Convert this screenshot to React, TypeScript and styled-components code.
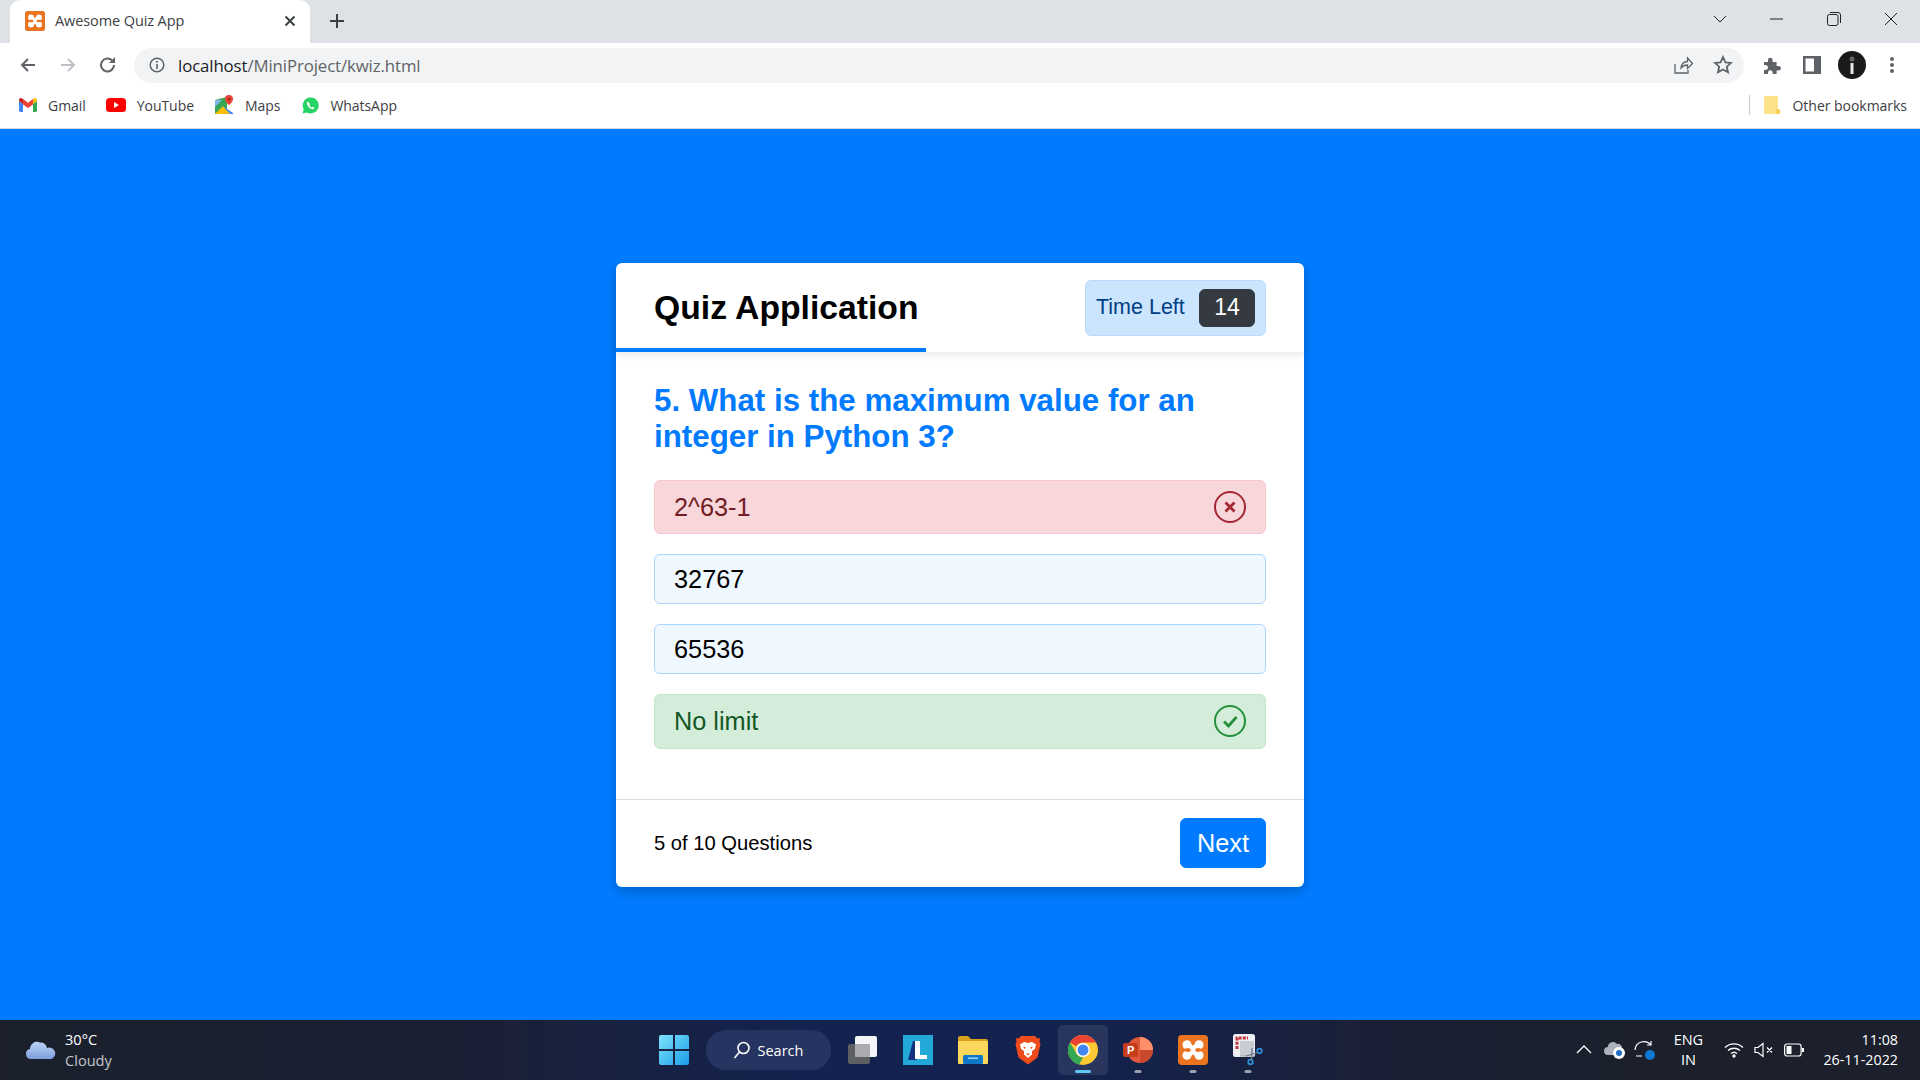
import React from "react";
import styled, { createGlobalStyle } from "styled-components";

const Global = createGlobalStyle`
  html, body { margin: 0; padding: 0; height: 100%; overflow: hidden; }
  body { font-family: "Liberation Sans", Arial, sans-serif; background: #007bff; }
  * { box-sizing: border-box; }
`;
const UI = `"Open Sans", "Noto Sans", sans-serif`;

const Shell = styled.div`display:flex;flex-direction:column;width:1920px;height:1080px;`;

/* ---------- browser chrome ---------- */
const TabStrip = styled.div`height:43px;background:#dee1e6;display:flex;align-items:stretch;padding-left:10px;flex:none;`;
const Tab = styled.div`
  width:300px;background:#fff;border-radius:10px 10px 0 0;display:flex;align-items:center;padding:0 14px 2px 15px;gap:10px;
  font:14.5px ${UI};color:#3c4043;
`;
const TabTitle = styled.span`flex:1;letter-spacing:-.1px;`;
const NewTab = styled.div`width:54px;display:flex;align-items:center;justify-content:center;padding-bottom:2px;`;
const WindowControls = styled.div`margin-left:auto;display:flex;align-items:flex-start;padding-right:1px;`;
const WinBtn = styled.div`width:57px;display:flex;justify-content:center;align-items:center;height:38px;`;
const Toolbar = styled.div`height:41px;background:#fff;display:flex;align-items:center;flex:none;padding:3px 0 0 19px;`;
const NavGroup = styled.div`display:grid;grid-template-columns:40px 40px 35px;flex:none;`;
const NavBtn = styled.div`display:flex;justify-content:flex-start;align-items:center;`;
const UrlBar = styled.div`
  width:1610px;height:35px;border-radius:18px;background:#f1f3f4;display:flex;align-items:center;padding:0 11px 0 15px;
  font:16.8px ${UI};color:#5f6368;flex:none;letter-spacing:-.1px;
`;
const UrlHost = styled.span`color:#202124;margin-left:13px;`;
const UrlPath = styled.span`color:#5f6368;`;
const UrlActions = styled.div`margin-left:auto;display:flex;gap:20px;align-items:center;`;
const ToolIcons = styled.div`display:flex;align-items:center;margin-left:8px;flex:none;`;
const ToolSlot = styled.div`width:40px;display:flex;justify-content:center;align-items:center;`;
const Bookmarks = styled.div`height:45px;background:#fff;display:flex;align-items:center;flex:none;padding:0 13px 2px 19px;font:14px ${UI};color:#3c4043;border-bottom:1px solid #d5d8dc;`;
const Bookmark = styled.div<{ $mr: number }>`display:flex;align-items:center;gap:11px;margin-right:${p => p.$mr}px;letter-spacing:-.05px;`;
const BookmarkRight = styled.div`margin-left:auto;display:flex;align-items:center;letter-spacing:-.03px;`;
const Sep = styled.div`width:1px;height:20px;background:#c8cbcf;margin-right:14px;`;
const FolderWrap = styled.div`margin-right:13px;display:flex;`;

/* ---------- quiz ---------- */
const Page = styled.main`flex:1;display:flex;align-items:center;justify-content:center;background:#007bff;`;
const Card = styled.section`
  width:688px;height:624px;background:#fff;border-radius:6px;display:flex;flex-direction:column;
  box-shadow:0 5px 12px rgba(0,0,0,.2);
`;
const Header = styled.header`
  height:89px;flex:none;position:relative;display:flex;align-items:center;justify-content:space-between;padding:1px 38px 0;
  box-shadow:0 4px 6px rgba(0,0,0,.08);border-radius:6px 6px 0 0;
`;
const Title = styled.h1`margin:0 0 1px;font-size:33.7px;font-weight:700;color:#000;`;
const Progress = styled.div`position:absolute;left:0;bottom:0;width:310px;height:4px;background:#007bff;`;
const Timer = styled.div`
  width:181px;height:56px;background:#cce5ff;border:1px solid #b8daff;border-radius:6px;display:flex;align-items:center;justify-content:space-between;
  padding:0 10px 0 10px;font-size:21.5px;color:#004085;
`;
const Seconds = styled.div`
  width:56px;height:38px;background:#343a40;border:1px solid #343a40;border-radius:6px;color:#fff;display:flex;align-items:center;justify-content:center;font-size:23px;
`;
const Body = styled.div`flex:1;padding:31px 38px 0;display:flex;flex-direction:column;`;
const Question = styled.h2`margin:0 0 25px;font-size:31.3px;line-height:36px;font-weight:700;color:#007bff;`;
const Options = styled.div`display:flex;flex-direction:column;gap:20px;`;
const tones = {
  plain: "background:#f0f8ff;border-color:#a9d5ff;color:#000;",
  wrong: "background:#f8d7da;border-color:#f5c6cb;color:#721c24;padding-top:1px;",
  right: "background:#d4edda;border-color:#c3e6cb;color:#155724;",
};
const Option = styled.div<{ $tone: keyof typeof tones }>`
  height:${p => (p.$tone === "plain" ? 50 : 54.5)}px;border:1px solid;border-radius:6px;display:flex;align-items:center;justify-content:space-between;
  padding:0 19px 0 19px;font-size:25.3px;${p => tones[p.$tone]}
`;
const Footer = styled.footer`
  height:88px;flex:none;border-top:1px solid #dcdcdc;display:flex;align-items:center;justify-content:space-between;padding:0 38px;font-size:20.2px;color:#000;
`;
const Next = styled.button`
  width:86px;height:50px;border:1px solid #007bff;border-radius:6px;background:#007bff;color:#fff;font:25.3px "Liberation Sans", Arial, sans-serif;padding:0;
`;

/* ---------- taskbar ---------- */
const Taskbar = styled.footer`
  height:60px;flex:none;display:grid;grid-template-columns:1fr auto 1fr;align-items:center;
  background:linear-gradient(90deg,#1b202c 0%,#1a2035 25%,#13224f 42%,#13224f 56%,#1a2035 72%,#1b202c 85%);
  color:#fff;font-family:${UI};
`;
const Weather = styled.div`display:flex;align-items:center;gap:8px;padding-left:25px;`;
const WeatherText = styled.div`font-size:14.6px;line-height:21px;`;
const WeatherSub = styled.div`color:#c3c6cc;`;
const Center = styled.div`display:flex;align-items:center;gap:5px;padding-left:1px;`;
const TaskSlot = styled.div<{ $active?: boolean; $dot?: string }>`
  width:50px;height:50px;border-radius:5px;display:flex;align-items:center;justify-content:center;position:relative;
  ${p => p.$active && "background:rgba(255,255,255,.09);"}
  ${p => p.$dot && `&::after{content:"";position:absolute;left:50%;bottom:2px;transform:translateX(-50%);width:${p.$dot === "on" ? 16 : 7}px;height:3px;border-radius:2px;background:${p.$dot === "on" ? "#5ec8fa" : "#9aa0ad"};}`}
`;
const Search = styled.div`
  width:125px;height:40px;border-radius:20px;background:#263461;display:flex;align-items:center;justify-content:center;gap:7px;font-size:14.5px;color:#fff;margin:0 2px;
`;
const Tray = styled.div`display:flex;align-items:center;justify-content:flex-end;padding-right:22px;`;
const TraySlot = styled.div`width:30px;display:flex;justify-content:center;align-items:center;`;
const Chevron = styled(TraySlot)`margin-right:1px;`;
const Lang = styled.div`font-size:14.5px;line-height:20px;text-align:center;width:48px;margin:0 7px 0 4px;`;
const Clock = styled.div`font-size:14.3px;line-height:20px;text-align:right;margin-left:14px;`;

/* ---------- icons ---------- */
const Xampp = ({ s = 20 }: { s?: number }) => (
  <svg width={s} height={s} viewBox="0 0 20 20">
    <rect width="20" height="20" rx="2.500" fill="#ea7420" />
    <g fill="#fff">
      <circle cx="6" cy="6.500" r="3" />
      <circle cx="14" cy="6.500" r="3" />
      <circle cx="6" cy="13.500" r="3" />
      <circle cx="14" cy="13.500" r="3" />
      <rect x="5" y="6" width="10" height="8" />
    </g>
    <ellipse cx="6.500" cy="10" rx="2" ry="1.300" fill="#ea7420" />
    <ellipse cx="13.500" cy="10" rx="2" ry="1.300" fill="#ea7420" />
    <path d="M10 3v3.800M10 13.200V17" stroke="#ea7420" strokeWidth="1.600" />
  </svg>
);
const Stroke = ({ d, c = "#5f6368", s = 20, w = 2, vb = 20 }: { d: string; c?: string; s?: number; w?: number; vb?: number }) => (
  <svg width={s} height={s} viewBox={`0 0 ${vb} ${vb}`} fill="none" stroke={c} strokeWidth={w}><path d={d} /></svg>
);
const Gmail = () => (
  <svg width="18" height="14" viewBox="0 0 18 14">
    <path d="M0 3v9.500C0 13.300.7 14 1.500 14H4V6z" fill="#4285f4" />
    <path d="M18 3v9.500c0 .8-.7 1.500-1.500 1.500H14V6z" fill="#34a853" />
    <path d="M14 1v5.500L9 10 4 6.500V1l5 3.700z" fill="#ea4335" />
    <path d="M0 3l4 3V1L2.500.3C1.300-.4 0 .5 0 2z" fill="#c5221f" />
    <path d="M18 3l-4 3V1l1.500-.7C16.700-.4 18 .5 18 2z" fill="#fbbc04" />
  </svg>
);
const YouTube = () => (
  <svg width="20" height="14" viewBox="0 0 20 14"><rect width="20" height="14" rx="3.500" fill="#f00" /><path d="M8 4l5 3-5 3z" fill="#fff" /></svg>
);
const Maps = () => (
  <svg width="19" height="20" viewBox="0 0 19 20">
    <path d="M0 5l12-3v15L0 19z" fill="#34a853" />
    <path d="M0 19l8-8 7 8z" fill="#fbbc04" />
    <path d="M8 11l10 7v1H15z" fill="#4285f4" />
    <path d="M0 5h7L0 12z" fill="#80b4f0" />
    <path d="M14 0a4 4 0 0 1 4 4c0 3-4 6-4 6s-4-3-4-6a4 4 0 0 1 4-4z" fill="#ea4335" />
    <circle cx="14" cy="4" r="1.500" fill="#a52714" />
  </svg>
);
const WhatsApp = () => (
  <svg width="17" height="17" viewBox="0 0 17 17">
    <path d="M.5 16.500l1.200-4.200A8 8 0 1 1 4.800 15.400z" fill="#25d366" />
    <path d="M6 4.500c-.8.300-1.300 1.200-1 2.400.5 2.200 2.800 4.600 5 5.200 1.200.3 2.200-.2 2.500-1.100l-1.900-1.300-.9.800c-1-.4-2-1.400-2.400-2.400l.8-.9z" fill="#fff" />
  </svg>
);
const Chrome = () => (
  <svg width="30" height="30" viewBox="0 0 30 30">
    <circle cx="15" cy="15" r="15" fill="#fcc934" />
    <path d="M15 0a15 15 0 0 1 13 7.500H15a7.500 7.500 0 0 0-6.500 3.750L2 7.500A15 15 0 0 1 15 0z" fill="#ea4335" />
    <path d="M2 7.500l6.500 11.250A7.500 7.500 0 0 0 15 22.500l-4 7.200A15 15 0 0 1 2 7.500z" fill="#34a853" />
    <circle cx="15" cy="15" r="7" fill="#fff" />
    <circle cx="15" cy="15" r="5.500" fill="#4285f4" />
  </svg>
);
const Snip = () => (
  <svg width="30" height="32" viewBox="0 0 30 32">
    <rect x="0" y="0" width="22" height="23" rx="2.500" fill="#eef0f4" />
    <path d="M4 15V4h11" fill="none" stroke="#c4343b" strokeWidth="3" strokeDasharray="3 1.200" />
    <rect x="7" y="7" width="14" height="15" rx="1" fill="#c9ccd2" />
    <path d="M21 22h-14" stroke="#9a9da3" strokeWidth="1" />
    <circle cx="26.500" cy="17" r="2.300" fill="none" stroke="#2f8fd8" strokeWidth="1.700" />
    <circle cx="17.500" cy="28" r="2.300" fill="none" stroke="#2f8fd8" strokeWidth="1.700" />
    <path d="M24.500 18.500L13 22M18.500 26L19 14" stroke="#6e7f92" strokeWidth="1.200" />
  </svg>
);
const Brave = () => (
  <svg width="26" height="30" viewBox="0 0 26 30">
    <path d="M6 1h14l2.500 2.500L25 3l-.5 4 1 2.500-3 13L13 29.500 3.500 22.500l-3-13L1.500 7 1 3l2.500.5z" fill="#ee4c1d" />
    <path d="M5 9.500L9 7l4 1 4-1 4 2.500-1 4.500-3 2v3.500l-4 3.500-4-3.500V16l-3-2z" fill="#fff" />
    <path d="M8 11.500l3 1-1.500 1.500zM18 11.500l-3 1 1.500 1.500z" fill="#ee4c1d" />
    <path d="M11 18.500h4l-2 2z" fill="#ee4c1d" />
  </svg>
);

const quizOptions = [
  { text: "2^63-1", tone: "wrong" as const },
  { text: "32767", tone: "plain" as const },
  { text: "65536", tone: "plain" as const },
  { text: "No limit", tone: "right" as const },
];

export default function App() {
  return (
    <Shell>
      <Global />
      <TabStrip>
        <Tab>
          <Xampp />
          <TabTitle>Awesome Quiz App</TabTitle>
          <Stroke s={12} vb={12} c="#3c4043" d="M1.500 1.500l9 9M10.500 1.500l-9 9" />
        </Tab>
        <NewTab><Stroke s={16} vb={16} c="#3c4043" d="M8 1v14M1 8h14" /></NewTab>
        <WindowControls>
          <WinBtn><Stroke s={14} vb={14} w={1} c="#202124" d="M1 4l6 6 6-6" /></WinBtn>
          <WinBtn><Stroke s={14} vb={14} w={1} c="#202124" d="M0 7h13" /></WinBtn>
          <WinBtn>
            <svg width="14" height="14" viewBox="0 0 14 14" fill="none" stroke="#202124"><rect x=".5" y="2.500" width="10.500" height="11" rx="2" /><path d="M3 .5h8a2.500 2.500 0 0 1 2.500 2.500v8" /></svg>
          </WinBtn>
          <WinBtn><Stroke s={14} vb={14} w={1} c="#202124" d="M1 1l12 12M13 1L1 13" /></WinBtn>
        </WindowControls>
      </TabStrip>

      <Toolbar>
        <NavGroup>
          <NavBtn><Stroke s={18} vb={18} d="M16 9H3M9 3L3 9l6 6" /></NavBtn>
          <NavBtn><Stroke s={18} vb={18} c="#bdc1c6" d="M2 9h13M9 3l6 6-6 6" /></NavBtn>
          <NavBtn>
            <svg width="18" height="18" viewBox="0 0 18 18" fill="none"><path d="M15 9a6.500 6.500 0 1 1-1.900-4.600" stroke="#5f6368" strokeWidth="2" /><path d="M16 1v6h-6z" fill="#5f6368" /></svg>
          </NavBtn>
        </NavGroup>
        <UrlBar>
          <svg width="16" height="16" viewBox="0 0 16 16" fill="none"><circle cx="8" cy="8" r="6.800" stroke="#5f6368" strokeWidth="1.500" /><path d="M8 7v5" stroke="#5f6368" strokeWidth="1.600" /><circle cx="8" cy="4.800" r="1" fill="#5f6368" /></svg>
          <UrlHost>localhost<UrlPath>/MiniProject/kwiz.html</UrlPath></UrlHost>
          <UrlActions>
            <Stroke s={20} vb={20} w={1.300} d="M2 9v9h13v-3M8 13c0-4 3-6.500 6.500-6.500V3l5 5.500-5 5V10c-3 0-5 1-6.500 3z" />
            <Stroke s={20} vb={20} w={1.800} d="M10 2l2.400 5.300 5.600.6-4.200 3.800 1.200 5.600L10 14.500l-5 2.800 1.200-5.600L2 7.900l5.600-.6z" />
          </UrlActions>
        </UrlBar>
        <ToolIcons>
          <ToolSlot>
            <svg width="19" height="19" viewBox="0 0 19 19"><path d="M1 6h4V4a2.300 2.300 0 0 1 4.600 0v2h4v4h2a2.300 2.300 0 0 1 0 4.600h-2V18h-4v-1.500a2.300 2.300 0 0 0-4.600 0V18H1v-4h1.500a2.500 2.500 0 0 0 0-5H1z" fill="#5f6368" /></svg>
          </ToolSlot>
          <ToolSlot>
            <svg width="18" height="18" viewBox="0 0 18 18"><path fillRule="evenodd" d="M0 0h18v18H0zM2.500 2.500v13h8.500v-13z" fill="#5f6368" /></svg>
          </ToolSlot>
          <ToolSlot>
            <svg width="28" height="28" viewBox="0 0 28 28"><circle cx="14" cy="14" r="14" fill="#1a1a1a" /><rect x="12.500" y="12" width="3" height="11" fill="#e8e8e8" /><circle cx="14" cy="8" r="2.500" fill="#666" /></svg>
          </ToolSlot>
          <ToolSlot>
            <svg width="6" height="18" viewBox="0 0 6 18"><circle cx="3" cy="3" r="2" fill="#5f6368" /><circle cx="3" cy="9" r="2" fill="#5f6368" /><circle cx="3" cy="15" r="2" fill="#5f6368" /></svg>
          </ToolSlot>
        </ToolIcons>
      </Toolbar>

      <Bookmarks>
        <Bookmark $mr={20}><Gmail />Gmail</Bookmark>
        <Bookmark $mr={21}><YouTube />YouTube</Bookmark>
        <Bookmark $mr={22}><Maps />Maps</Bookmark>
        <Bookmark $mr={0}><WhatsApp />WhatsApp</Bookmark>
        <BookmarkRight>
          <Sep />
          <FolderWrap>
            <svg width="16" height="19" viewBox="0 0 16 19"><rect width="14" height="18" rx="1.500" fill="#fde28a" /><rect x="12" y="13" width="4" height="5" rx="1" fill="#f7cf55" /></svg>
          </FolderWrap>
          Other bookmarks
        </BookmarkRight>
      </Bookmarks>

      <Page>
        <Card>
          <Header>
            <Title>Quiz Application</Title>
            <Timer>Time Left<Seconds>14</Seconds></Timer>
            <Progress />
          </Header>
          <Body>
            <Question>5. What is the maximum value for an integer in Python 3?</Question>
            <Options>
              {quizOptions.map(o => (
                <Option key={o.text} $tone={o.tone}>
                  {o.text}
                  {o.tone === "wrong" && (
                    <svg width="32" height="32" viewBox="0 0 32 32" fill="none"><circle cx="16" cy="16" r="15" stroke="#a42834" strokeWidth="2" /><path d="M11.500 11.500l9 9M20.500 11.500l-9 9" stroke="#a42834" strokeWidth="2.800" /></svg>
                  )}
                  {o.tone === "right" && (
                    <svg width="32" height="32" viewBox="0 0 32 32" fill="none"><circle cx="16" cy="16" r="15" stroke="#23903c" strokeWidth="2" /><path d="M10 16.500l4.500 4.500 8-9" stroke="#23903c" strokeWidth="2.800" /></svg>
                  )}
                </Option>
              ))}
            </Options>
          </Body>
          <Footer>
            <span>5 of 10 Questions</span>
            <Next>Next</Next>
          </Footer>
        </Card>
      </Page>

      <Taskbar>
        <Weather>
          <svg width="32" height="22" viewBox="0 0 32 22"><defs><linearGradient id="cl" x1="0" y1="0" x2="0" y2="1"><stop offset="0" stopColor="#bcd3f5" /><stop offset="1" stopColor="#7f9fdc" /></linearGradient></defs><path d="M6 20a5 5 0 0 1-1-9.900A7 7 0 0 1 15 3.500a7 7 0 0 1 7 5.500 5.500 5.500 0 0 1 4.500 11z" fill="url(#cl)" /></svg>
          <WeatherText>30°C<WeatherSub>Cloudy</WeatherSub></WeatherText>
        </Weather>
        <Center>
          <TaskSlot>
            <svg width="30" height="30" viewBox="0 0 30 30"><defs><linearGradient id="wn" x1="0" y1="0" x2="1" y2="1"><stop offset="0" stopColor="#7fe3fb" /><stop offset="1" stopColor="#1a9de8" /></linearGradient></defs><path d="M0 2a2 2 0 0 1 2-2h12v14H0zM16 0h12a2 2 0 0 1 2 2v12H16zM0 16h14v14H2a2 2 0 0 1-2-2zM16 16h14v12a2 2 0 0 1-2 2H16z" fill="url(#wn)" /></svg>
          </TaskSlot>
          <Search>
            <svg width="18" height="18" viewBox="0 0 18 18" fill="none" stroke="#fff" strokeWidth="1.600"><circle cx="10.500" cy="7" r="5.500" /><path d="M6.500 11L1.500 17" /></svg>
            Search
          </Search>
          <TaskSlot>
            <svg width="30" height="30" viewBox="0 0 30 30"><rect x="0" y="9" width="22" height="20" rx="2" fill="#5e5f62" /><rect x="7" y="1" width="22" height="21" rx="2" fill="#f4f5f7" /><rect x="7" y="9" width="15" height="13" fill="#a9abaf" /></svg>
          </TaskSlot>
          <TaskSlot>
            <svg width="30" height="30" viewBox="0 0 30 30"><rect width="30" height="30" fill="#22a9d8" /><path d="M10 6L5 25h9l-1-3h-1V6z" fill="#14307e" /><path d="M12 6h5v14h7v4H12z" fill="#fff" /></svg>
          </TaskSlot>
          <TaskSlot>
            <svg width="30" height="28" viewBox="0 0 30 28"><path d="M0 2a2 2 0 0 1 2-2h8l3 3h15a2 2 0 0 1 2 2v3H0z" fill="#d9a21c" /><rect y="5" width="30" height="23" rx="1" fill="#fbd75b" /><rect x="5" y="19" width="20" height="9" rx="1.500" fill="#0f78c8" /><rect x="10" y="21.500" width="10" height="1.500" fill="#9fd2f5" /></svg>
          </TaskSlot>
          <TaskSlot><Brave /></TaskSlot>
          <TaskSlot $active $dot="on"><Chrome /></TaskSlot>
          <TaskSlot $dot="off">
            <svg width="30" height="30" viewBox="0 0 30 30"><circle cx="17" cy="15" r="13" fill="#e0583a" /><path d="M17 2a13 13 0 0 1 13 13H17z" fill="#ff8f6b" /><path d="M17 15h13a13 13 0 0 1-13 13z" fill="#c8482b" /><rect x="0" y="8" width="15" height="14" rx="2" fill="#c43e1c" /><text x="4" y="19" fill="#fff" fontSize="11" fontWeight="700" fontFamily="Liberation Sans">P</text></svg>
          </TaskSlot>
          <TaskSlot $dot="off"><Xampp s={30} /></TaskSlot>
          <TaskSlot $dot="off"><Snip /></TaskSlot>
        </Center>
        <Tray>
          <Chevron><Stroke s={18} vb={18} c="#fff" w={1.300} d="M2 12l7-7 7 7" /></Chevron>
          <TraySlot>
            <svg width="22" height="20" viewBox="0 0 22 20"><path d="M4 15a4 4 0 0 1 0-8 5 5 0 0 1 9-3 4 4 0 0 1 5 4v7z" fill="#aeb3bb" /><circle cx="15" cy="13" r="6" fill="#fff" /><circle cx="15" cy="13" r="3" fill="#1b6fc4" /></svg>
          </TraySlot>
          <TraySlot>
            <svg width="22" height="22" viewBox="0 0 22 22" fill="none"><path d="M1 11a9 9 0 0 1 16-5M2 17h6" stroke="#fff" strokeWidth="1.200" /><path d="M17 2v4h-4" stroke="#fff" strokeWidth="1.200" /><circle cx="16" cy="16" r="5" fill="#0f78d4" /></svg>
          </TraySlot>
          <Lang>ENG<br />IN</Lang>
          <TraySlot>
            <svg width="20" height="16" viewBox="0 0 20 16" fill="none" stroke="#fff" strokeWidth="1.400"><path d="M1 5.500a13 13 0 0 1 18 0M4 8.500a9 9 0 0 1 12 0M7 11.500a4.500 4.500 0 0 1 6 0" /><circle cx="10" cy="14" r="1" fill="#fff" /></svg>
          </TraySlot>
          <TraySlot>
            <svg width="20" height="16" viewBox="0 0 20 16" fill="none" stroke="#fff" strokeWidth="1.200"><path d="M1 5.500h3L9 1.500v13l-5-4H1zM13 5.500l5 5M18 5.500l-5 5" /></svg>
          </TraySlot>
          <TraySlot>
            <svg width="20" height="14" viewBox="0 0 20 14" fill="none"><rect x=".6" y="1" width="16.500" height="12" rx="2.500" stroke="#fff" strokeWidth="1.200" /><rect x="2.500" y="3" width="5" height="8" fill="#fff" /><rect x="18" y="5" width="2" height="4" fill="#fff" /></svg>
          </TraySlot>
          <Clock>11:08<br />26-11-2022</Clock>
        </Tray>
      </Taskbar>
    </Shell>
  );
}
